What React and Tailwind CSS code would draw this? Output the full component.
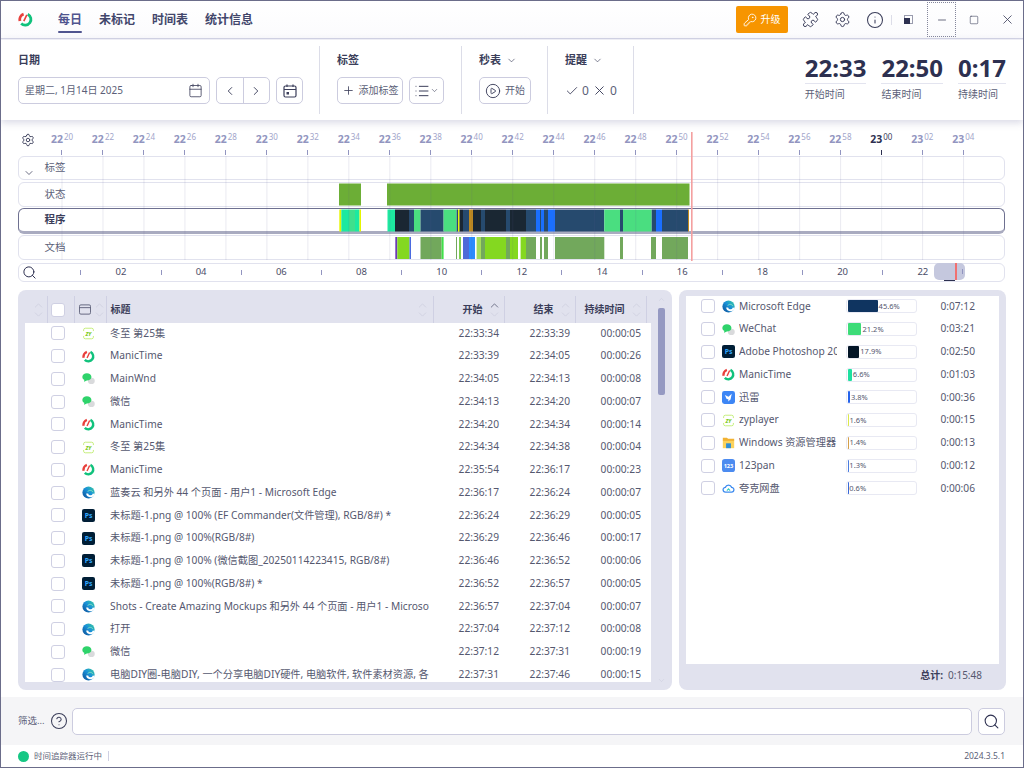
import React from "react";
import {
  Calendar, Check, ChevronDown, ChevronLeft, ChevronRight, ChevronUp,
  CircleHelp, CirclePlay, Info, KeyRound, List, Minus, Plus, Puzzle, Search, Settings, Square, X,
} from "lucide-react";

const FONT = { fontFamily: '"Noto Sans", "Noto Sans CJK SC", sans-serif' };

const Logo = ({ size = 13 }) => (
  <svg width={size} height={size} viewBox="0 0 16 16" fill="none">
    <path d="M10.4 2.4A6.1 6.1 0 1 1 3.4 12.2" stroke="#10c27c" strokeWidth="3" />
    <path d="M6 2.300A6.100 6.100 0 0 0 2.100 9.600" stroke="#e8403c" strokeWidth="3" />
    <path d="M9.400 3 6.200 9.800" stroke="#e8403c" strokeWidth="1.700" />
  </svg>
);
const Edge = () => (
  <svg width="13" height="13" viewBox="0 0 16 16" fill="none">
    <defs>
      <linearGradient id="edge-g" x1="1" y1="0" x2="0" y2="1">
        <stop offset="0" stopColor="#3ccf9a" />
        <stop offset="0.45" stopColor="#1a93d8" />
        <stop offset="1" stopColor="#0b4a94" />
      </linearGradient>
    </defs>
    <circle cx="8" cy="8" r="7.5" fill="url(#edge-g)" />
    <path d="M14.5 9.5c-.8 2.400-3.200 3.600-5.400 3-1.700-.5-2.700-1.800-2.700-3.300" stroke="#fff" strokeWidth="2.4" />
    <path d="M7 7c1-2 5-2.500 6.500.5" stroke="#7fe0c0" strokeWidth="1.2" />
  </svg>
);
const WeChat = () => (
  <svg width="13" height="13" viewBox="0 0 16 16">
    <ellipse cx="11.5" cy="11" rx="4.2" ry="3.8" fill="#d9dadc" />
    <ellipse cx="6" cy="6" rx="5.6" ry="4.6" fill="#2fd36b" />
    <path d="M3 9 2.5 12 6 10.5z" fill="#2fd36b" />
  </svg>
);
const Ps = () => (
  <svg width="13" height="13" viewBox="0 0 16 16">
    <rect width="16" height="16" rx="2.5" fill="#001e36" />
    <text x="8" y="11.5" textAnchor="middle" fontSize="8.5" fontWeight="700" fill="#31a8ff" style={FONT}>Ps</text>
  </svg>
);
const Zy = () => (
  <svg width="13" height="13" viewBox="0 0 16 16" fill="none">
    <path d="M2 5V3.500A2 2 0 0 1 4 1.500h8a2 2 0 0 1 2 2V5M2 11v1.500a2 2 0 0 0 2 2h8a2 2 0 0 0 2-2V11" stroke="#c4ee7a" strokeWidth="1.2" />
    <text x="8" y="10.5" textAnchor="middle" fontSize="6.5" fontWeight="800" fontStyle="italic" fill="#7fcc1f" style={FONT}>ZY</text>
  </svg>
);
const Thunder = () => (
  <svg width="13" height="13" viewBox="0 0 16 16">
    <rect width="16" height="16" rx="3" fill="#3d86f5" />
    <path d="M3.5 5 8 7l4-3.500-1.500 7L7.500 13 8 10.500 5.500 9.500z" fill="#fff" />
  </svg>
);
const Folder = () => (
  <svg width="13" height="13" viewBox="0 0 16 16">
    <path d="M1 2h5l1.500 1.500H15V6H1z" fill="#f2b233" />
    <rect x="1" y="6" width="14" height="9" fill="#fbd25c" />
    <rect x="5" y="9" width="6" height="6" fill="#2f8fd8" />
  </svg>
);
const Pan = () => (
  <svg width="13" height="13" viewBox="0 0 16 16">
    <rect width="16" height="16" rx="3.5" fill="#4c8bf0" />
    <text x="8" y="11" textAnchor="middle" fontSize="7" fontWeight="700" fill="#fff" style={FONT}>123</text>
  </svg>
);
const Quark = () => (
  <svg width="13" height="13" viewBox="0 0 16 16" fill="none">
    <path d="M4.500 12.500a3 3 0 0 1-.3-6 4 4 0 0 1 7.600 0 3 3 0 0 1-.3 6z" stroke="#3f8cf0" strokeWidth="1.6" />
    <path d="M6 10.500 8 8.500l2 2" stroke="#35d0c0" strokeWidth="1.4" />
  </svg>
);

const ICONS = { zy: Zy, mt: Logo, wx: WeChat, edge: Edge, ps: Ps };

const rows = [
  ["zy", "冬至 第25集", "22:33:34", "22:33:39", "00:00:05"],
  ["mt", "ManicTime", "22:33:39", "22:34:05", "00:00:26"],
  ["wx", "MainWnd", "22:34:05", "22:34:13", "00:00:08"],
  ["wx", "微信", "22:34:13", "22:34:20", "00:00:07"],
  ["mt", "ManicTime", "22:34:20", "22:34:34", "00:00:14"],
  ["zy", "冬至 第25集", "22:34:34", "22:34:38", "00:00:04"],
  ["mt", "ManicTime", "22:35:54", "22:36:17", "00:00:23"],
  ["edge", "蓝奏云 和另外 44 个页面 - 用户1 - Microsoft Edge", "22:36:17", "22:36:24", "00:00:07"],
  ["ps", "未标题-1.png @ 100% (EF Commander(文件管理), RGB/8#) *", "22:36:24", "22:36:29", "00:00:05"],
  ["ps", "未标题-1.png @ 100%(RGB/8#)", "22:36:29", "22:36:46", "00:00:17"],
  ["ps", "未标题-1.png @ 100% (微信截图_20250114223415, RGB/8#)", "22:36:46", "22:36:52", "00:00:06"],
  ["ps", "未标题-1.png @ 100%(RGB/8#) *", "22:36:52", "22:36:57", "00:00:05"],
  ["edge", "Shots - Create Amazing Mockups 和另外 44 个页面 - 用户1 - Microsoft Edge", "22:36:57", "22:37:04", "00:00:07"],
  ["edge", "打开", "22:37:04", "22:37:12", "00:00:08"],
  ["wx", "微信", "22:37:12", "22:37:31", "00:00:19"],
  ["edge", "电脑DIY圈-电脑DIY, 一个分享电脑DIY硬件, 电脑软件, 软件素材资源, 各类教程", "22:37:31", "22:37:46", "00:00:15"],
];

const apps = [
  [Edge, "Microsoft Edge", 45.6, "#0f3460", "0:07:12"],
  [WeChat, "WeChat", 21.2, "#3ddc78", "0:03:21"],
  [Ps, "Adobe Photoshop 2025", 17.9, "#031526", "0:02:50"],
  [Logo, "ManicTime", 6.6, "#1fe0a0", "0:01:03"],
  [Thunder, "迅雷", 3.8, "#2563eb", "0:00:36"],
  [Zy, "zyplayer", 1.6, "#dbe84c", "0:00:15"],
  [Folder, "Windows 资源管理器", 1.4, "#d4a04a", "0:00:13"],
  [Pan, "123pan", 1.3, "#4a7de0", "0:00:12"],
  [Quark, "夸克网盘", 0.6, "#3a6ad8", "0:00:06"],
];

const rulerTicks = [
  ["22", "20"], ["22", "22"], ["22", "24"], ["22", "26"], ["22", "28"], ["22", "30"], ["22", "32"], ["22", "34"],
  ["22", "36"], ["22", "38"], ["22", "40"], ["22", "42"], ["22", "44"], ["22", "46"], ["22", "48"], ["22", "50"],
  ["22", "52"], ["22", "54"], ["22", "56"], ["22", "58"], ["23", "00"], ["23", "02"], ["23", "04"],
];

const statusBars = [[339, 361], [387, 689.5]];

const TEAL = "#1de9a0", GRN = "#4ade80", NAVY = "#264a6e", DARK = "#1a2733", BLUE = "#1a6fff", YEL = "#e5f500", ORG = "#c08a1e";
const programBars = [
  [339.3, 341.3, YEL], [341.3, 349, TEAL], [349, 355, "#3fe08c"], [355, 359.5, TEAL], [359.5, 361, YEL],
  [387.5, 395, TEAL], [395, 409, DARK], [409, 414, NAVY], [414, 420.5, GRN], [420.5, 443.6, NAVY], [443.6, 456.6, GRN],
  [456.6, 458, NAVY], [458, 459.5, YEL], [459.5, 463, DARK], [463, 469, NAVY], [469, 473, ORG], [473, 481, DARK],
  [481, 485, NAVY], [485, 506, DARK], [506, 510, NAVY], [510, 526, DARK], [526, 536, NAVY], [536, 540, BLUE],
  [540, 541, NAVY], [541, 544, BLUE], [544, 548, NAVY], [548, 555, BLUE], [555, 604.3, NAVY], [604.3, 620, GRN],
  [620, 623, NAVY], [623, 651.7, GRN], [651.7, 656, NAVY], [656, 662, BLUE], [662, 688, NAVY], [688, 689, ORG],
];

const LIME = "#84d820", MUTE = "#72a85c";
const docBars = [
  [395.3, 397.3, "#6a3ab5"], [397.3, 409.5, LIME], [409.5, 411, "#4a6ae0"], [420.5, 441.6, MUTE], [441.6, 443.6, "#3fe04a"],
  [456, 457, MUTE], [459, 461, "#7fcf50"], [463, 469, "#4f6ad8"], [469, 475, "#2b8cff"], [476.6, 481, "#a5dd5a"],
  [481, 485, MUTE], [485, 506, LIME], [506, 510, MUTE], [510, 518, LIME], [520.6, 526, LIME], [526, 536, MUTE],
  [540, 542, MUTE], [544, 548, MUTE], [555, 604.3, MUTE], [620, 623, MUTE], [651, 656, MUTE], [662, 688, MUTE],
];

const grid = rulerTicks.map((_, i) => 62 + i * 40.98);

const SortIcon = ({ active }) => (
  <span className="flex flex-col items-center text-[#c9cbdc]">
    <ChevronUp size={13} strokeWidth={1.2} className={active ? "text-[#3b3e5a] -mb-[2px]" : "-mb-[2px]"} />
    <ChevronDown size={13} strokeWidth={1.2} className="-mt-[2px]" />
  </span>
);

const Box = ({ className = "" }) => (
  <span className={"block w-[14px] h-[14px] bg-white border border-[#cfd0e3] rounded-[3px] " + className} />
);

const TimelineRow = ({ label, selected, h, chevron }) => (
  <div
    className={
      "relative bg-white rounded-[6px] pl-[25.5px] flex items-center text-[10.5px] " +
      h +
      (selected
        ? " border-[1.5px] border-[#6e7090] border-b-[3px] border-b-[#a9abc0] font-bold text-[#3b3e5a]"
        : " border-[1.5px] border-[#e1e2ee] text-[#5c5f78]")
    }
  >
    {chevron && <ChevronDown size={12} strokeWidth={1.5} className="absolute left-[4px] bottom-[0px] text-[#3b3e5a]" />}
    {label}
  </div>
);

const gridTemplate = "grid grid-cols-[22.6px_27px_32px_327px_71px_71px_71px]";

export default function App() {
  return (
    <div style={FONT} className="w-[1024px] h-[768px] bg-white border border-[#6b6d8a] flex flex-col overflow-hidden text-[#3b3e5a]">
      {/* Title bar */}
      <div className="h-[38px] shrink-0 flex items-center border-b border-[#d5d6e6] bg-gradient-to-b from-white to-[#fbfbfd]">
        <span className="ml-[17px] mr-[25px] flex"><Logo size={15} /></span>
        <div className="flex gap-[17px] text-[12px] font-bold text-[#42466b] pt-[1px]">
          <div className="relative text-[#50558f]">
            每日
            <span className="absolute left-0 right-0 -bottom-[4px] h-[2.5px] rounded bg-[#50558f]" />
          </div>
          <div>未标记</div>
          <div>时间表</div>
          <div>统计信息</div>
        </div>
        <div className="ml-auto flex items-center h-full">
          <button className="w-[52px] h-[27px] bg-[#f79500] rounded-[2px] text-white text-[10px] flex items-center justify-center gap-[4px]">
            <KeyRound size={14} strokeWidth={1.5} />
            升级
          </button>
          <Puzzle size={17} strokeWidth={1.4} className="ml-[14px]" />
          <Settings size={17} strokeWidth={1.4} className="ml-[15px]" />
          <Info size={18} strokeWidth={1.4} className="ml-[15.5px]" />
          <span className="ml-[7px] w-px h-[10px] bg-[#dcdde8]" />
          <svg width="9" height="9" viewBox="0 0 9 9" className="ml-[12px]">
            <rect x="0.5" y="0.5" width="8" height="8" fill="none" stroke="#9a9cae" />
            <rect x="0" y="3" width="6" height="6" fill="#2d3050" />
          </svg>
          <div className="ml-[14px] w-[29px] h-[35px] border border-dotted border-[#85879c] flex items-center justify-center">
            <Minus size={12} strokeWidth={1.5} />
          </div>
          <Square size={10} strokeWidth={1.4} className="ml-[13px]" />
          <X size={15} strokeWidth={1.3} className="ml-[20.5px] mr-[8.5px]" />
        </div>
      </div>

      {/* Toolbar */}
      <div className="h-[81px] shrink-0 flex py-[6px] bg-white relative z-10 shadow-[0_3px_7px_rgba(110,112,160,0.25)] border-t border-[#eeeef5]">
        <div className="w-[319px] pl-[17px] pt-[6px] border-r border-[#dcdde8]">
          <div className="h-[16px] text-[11px] font-semibold leading-[16px]">日期</div>
          <div className="mt-[9px] flex gap-[6px]">
            <div className="w-[192px] h-[27px] border border-[#ccccdf] rounded-[5px] flex items-center justify-between pl-[6px] pr-[6px] text-[10px] text-[#5c5f78]">
              星期二, 1月14日 2025
              <Calendar size={15} strokeWidth={1.3} className="text-[#3b3e5a]" />
            </div>
            <div className="w-[54px] h-[27px] border border-[#ccccdf] rounded-[5px] flex">
              <span className="flex-1 flex items-center justify-center border-r border-[#ccccdf]"><ChevronLeft size={14} strokeWidth={1.6} /></span>
              <span className="flex-1 flex items-center justify-center"><ChevronRight size={14} strokeWidth={1.6} /></span>
            </div>
            <div className="w-[27px] h-[27px] border border-[#ccccdf] rounded-[5px] flex items-center justify-center">
              <svg width="14" height="14" viewBox="0 0 14 14" fill="none" stroke="#3b3e5a" strokeWidth="1.2">
                <rect x="1" y="2" width="12" height="11" rx="1.5" />
                <path d="M1 5.500h12M4 0.500V3M10 0.500V3" />
                <rect x="3.5" y="8" width="2.5" height="2.5" fill="#3b3e5a" stroke="none" />
              </svg>
            </div>
          </div>
        </div>
        <div className="w-[142px] pl-[17px] pt-[6px] border-r border-[#dcdde8]">
          <div className="h-[16px] text-[11px] font-semibold leading-[16px]">标签</div>
          <div className="mt-[9px] flex gap-[6px]">
            <div className="w-[66px] h-[27px] border border-[#ccccdf] rounded-[5px] flex items-center justify-center gap-[4px] text-[10px] text-[#5c5f78] whitespace-nowrap">
              <Plus size={13} strokeWidth={1.5} className="text-[#3b3e5a]" />
              添加标签
            </div>
            <div className="w-[35px] h-[27px] border border-[#ccccdf] rounded-[5px] flex items-center justify-center">
              <List size={16} strokeWidth={1.5} />
              <ChevronDown size={9} strokeWidth={1.5} />
            </div>
          </div>
        </div>
        <div className="w-[86px] pl-[17px] pt-[6px] border-r border-[#dcdde8]">
          <div className="h-[16px] text-[11px] font-semibold leading-[16px] flex items-center gap-[5px]">
            秒表 <ChevronDown size={11} strokeWidth={1.4} />
          </div>
          <div className="mt-[9px] w-[52px] h-[27px] border border-[#ccccdf] rounded-[5px] flex items-center justify-center gap-[4px] text-[10px] text-[#5c5f78]">
            <CirclePlay size={16} strokeWidth={1.4} className="text-[#3b3e5a]" />
            开始
          </div>
        </div>
        <div className="w-[86px] pl-[17px] pt-[6px] border-r border-[#dcdde8]">
          <div className="h-[16px] text-[11px] font-semibold leading-[16px] flex items-center gap-[5px]">
            提醒 <ChevronDown size={11} strokeWidth={1.4} />
          </div>
          <div className="mt-[9px] h-[27px] flex items-center gap-[3px] text-[12px] text-[#5c5f78]">
            <Check size={14} strokeWidth={1.5} className="text-[#3b3e5a]" />
            0
            <X size={15} strokeWidth={1.5} className="text-[#3b3e5a]" />
            0
          </div>
        </div>
        <div className="ml-auto mr-[17px] flex gap-[15px] pt-[7px]">
          {[["22:33", "开始时间"], ["22:50", "结束时间"], ["0:17", "持续时间"]].map(([t, l]) => (
            <div key={l}>
              <div className="text-[24px] leading-[30px] font-bold text-[#2d3050] border-b border-[#e3e4ef]">{t}</div>
              <div className="text-[10px] mt-[3px] leading-[14px] text-[#5c5f78]">{l}</div>
            </div>
          ))}
        </div>
      </div>

      {/* Timeline */}
      <div className="relative h-[160px] mt-[10px] shrink-0">
        <div className="h-[26px] flex pl-[40.5px] relative">
          <Settings size={14} strokeWidth={1.6} className="absolute left-[20px] top-[3px]" />
          {rulerTicks.map(([h, m], i) => (
            <div key={i} className="w-[40.98px] flex flex-col items-center">
              <div className={"h-[20px] leading-[18px] text-[10.5px] font-bold whitespace-nowrap " + (h === "23" && m === "00" ? "text-[#2d3050]" : "text-[#9295c0]")}>
                {h}
                <span className={"text-[8px] font-normal relative -top-[3px] ml-px " + (h === "23" && m === "00" ? "text-[#3b3e5a]" : "text-[#a2a5ca]")}>{m}</span>
              </div>
              <span className={"w-px h-[5px] " + (h === "23" && m === "00" ? "bg-[#2d3050]" : "bg-[#9295c0]")} />
            </div>
          ))}
        </div>
        <div className="ml-[17px] w-[987px] flex flex-col">
          <TimelineRow label="标签" h="h-[24px]" chevron />
          <div className="h-[2px]" />
          <TimelineRow label="状态" h="h-[25px]" />
          <div className="h-px" />
          <TimelineRow label="程序" selected h="h-[26px]" />
          <div className="h-px" />
          <TimelineRow label="文档" h="h-[25px]" />
          <div className="mt-[3px] relative h-[19px] bg-white border-[1.5px] border-[#e1e2ee] rounded-[6px] flex items-center pl-[41.8px] text-[9.5px] text-[#4a4d68]">
            <Search size={15} strokeWidth={1.6} className="absolute left-[3px] top-[0.5px] text-[#2d3050]" />
            {Array.from({ length: 23 }, (_, i) => (
              <div key={i} className="w-[40.1px] flex justify-center">
                {i % 2 === 0 ? <span className="block w-px h-[5px] bg-[#9295c0]" /> : String(i + 1).padStart(2, "0")}
              </div>
            ))}
            <div className="absolute left-[915px] -top-[1px] w-[31px] h-[17px] bg-[#c5c8de] rounded-[5px]">
              <span className="absolute left-[21px] top-0 w-[1.5px] h-full bg-[#f07070]" />
              <span className="absolute left-[27.5px] top-[6px] w-px h-[5px] bg-[#9295c0]" />
              <span className="absolute left-[10px] -bottom-[1px] w-[11px] h-[1.5px] bg-[#2d3050]" />
            </div>
          </div>
        </div>
        <svg className="absolute -left-px top-0 pointer-events-none" width="1024" height="135" viewBox="0 130 1024 135">
          {statusBars.map(([a, b], i) => <rect key={i} x={a} y="183.5" width={b - a} height="22" fill="#6cae36" />)}
          {programBars.map(([a, b, c], i) => <rect key={i} x={a} y="209.5" width={b - a} height="22" fill={c} />)}
          {docBars.map(([a, b, c], i) => <rect key={i} x={a} y="237" width={b - a} height="22" fill={c} />)}
          {grid.map((x, i) => <line key={i} x1={x} x2={x} y1="156" y2="260" stroke={i === 20 ? "#8e90a8" : "#5a5d90"} strokeOpacity="0.13" />)}
          <rect x="691" y="132" width="1.6" height="129" fill="#f4a0a0" />
        </svg>
      </div>

      {/* Panels */}
      <div className="h-[400px] shrink-0 flex gap-[7px] pl-[17px]">
        <div className="w-[654px] bg-[#e1e2ee] rounded-[8px] relative pl-[7px] pb-[8px] flex flex-col">
          <div className={gridTemplate + " h-[33px] shrink-0 w-[626px] items-center text-[10px] font-bold"}>
            <div className="h-[27px] mt-[6px] border-r border-[#cfd0e3] flex items-center justify-end pr-[2px]"><SortIcon /></div>
            <div className="h-[27px] mt-[6px] border-r border-[#cfd0e3] pl-[3px] flex items-center"><Box /></div>
            <div className="h-[27px] mt-[6px] border-r border-[#cfd0e3] pl-[4px] flex items-center gap-[2px]">
              <svg width="13" height="11" viewBox="0 0 13 11" fill="none" stroke="#5c5f78">
                <rect x="0.5" y="0.5" width="12" height="10" rx="1.5" />
                <path d="M0.500 3.500h12" />
              </svg>
              <SortIcon />
            </div>
            <div className="h-[27px] mt-[6px] border-r border-[#cfd0e3] pl-[4px] pr-[4px] flex items-center justify-between">标题<SortIcon /></div>
            <div className="h-[27px] mt-[6px] border-r border-[#cfd0e3] pr-[3px] flex items-center justify-end gap-[5px]">开始<SortIcon active /></div>
            <div className="h-[27px] mt-[6px] border-r border-[#cfd0e3] pr-[3px] flex items-center justify-end gap-[5px]">结束<SortIcon /></div>
            <div className="h-[27px] mt-[6px] border-r border-[#cfd0e3] pr-[3px] flex items-center justify-end gap-[5px] whitespace-nowrap">持续时间<SortIcon /></div>
          </div>
          <div className="w-[626px] flex-1 bg-white overflow-hidden text-[10.2px] text-[#55586f]">
            {rows.map(([icon, title, a, b, c], i) => {
              const Ico = ICONS[icon];
              return (
                <div key={i} className={gridTemplate + " h-[22.75px] items-center -translate-y-[1px]"}>
                  <div />
                  <div className="pl-[3px]"><Box /></div>
                  <div className="pl-[7.5px] flex"><Ico /></div>
                  <div className="pl-[3.5px] mr-[5px] overflow-hidden whitespace-nowrap">{title}</div>
                  <div className="text-right pr-[5.6px]">{a}</div>
                  <div className="text-right pr-[5.6px]">{b}</div>
                  <div className="text-right pr-[5.6px]">{c}</div>
                </div>
              );
            })}
          </div>
          <ChevronUp size={9} strokeWidth={1.3} className="absolute right-[6.5px] top-[5px] text-[#c9cbdc]" />
          <ChevronDown size={9} strokeWidth={1.3} className="absolute right-[6.5px] bottom-[5px] text-[#c9cbdc]" />
          <div className="absolute right-[7px] top-[18px] w-[7px] h-[87px] rounded-[2px] bg-[#9599c2]" />
        </div>

        <div className="w-[327px] bg-[#e1e2ee] rounded-[8px] px-[7px] pt-[6px] flex flex-col">
          <div className="h-[368px] bg-white text-[10.2px] text-[#55586f]">
            {apps.map(([Ico, name, pct, color, time]) => (
              <div key={name} className="h-[22.75px] pl-[15px] flex items-center -translate-y-[1px]">
                <Box />
                <span className="ml-[6.5px] shrink-0 flex"><Ico /></span>
                <span className="ml-[4.5px] w-[98px] shrink-0 overflow-hidden whitespace-nowrap">{name}</span>
                <div className="ml-[8.5px] w-[71px] h-[14px] shrink-0 border border-[#e8e9f3] rounded-[3px] flex items-center pl-px">
                  <span className="h-[12px] rounded-[1px]" style={{ width: Math.max(pct * 0.66, 0.8), backgroundColor: color }} />
                  <span className="ml-px text-[7.5px]">{pct}%</span>
                </div>
                <span className="ml-auto mr-[24px]">{time}</span>
              </div>
            ))}
          </div>
          <div className="flex-1 flex items-center justify-end pr-[17px] pb-[3px] gap-[5px] text-[10px] text-[#55586f]">
            <span className="font-bold text-[#3b3e5a]">总计:</span>0:15:48
          </div>
        </div>
      </div>

      {/* Filter */}
      <div className="mt-[7px] h-[48px] shrink-0 bg-[#f5f5f7] flex items-center pl-[17px] pr-[18px]">
        <span className="w-[32px] text-[9.5px] text-[#5c5f78]">筛选...</span>
        <CircleHelp size={18} strokeWidth={1.4} />
        <div className="ml-[4px] flex-1 h-[27px] bg-white border border-[#ccccdf] rounded-[5px]" />
        <div className="ml-[6px] w-[27px] h-[27px] bg-white border border-[#ccccdf] rounded-[5px] flex items-center justify-center">
          <Search size={17} strokeWidth={1.5} className="text-[#2d3050]" />
        </div>
      </div>

      {/* Status bar */}
      <div className="flex-1 flex items-center pl-[17px] pr-[18px] text-[8.5px] text-[#5c5f78]">
        <span className="w-[11px] h-[11px] rounded-full bg-[#16c784]" />
        <span className="ml-[5px]">时间追踪器运行中</span>
        <span className="ml-[6px] w-px h-[10px] bg-[#cfd0e3]" />
        <span className="ml-auto">2024.3.5.1</span>
      </div>
    </div>
  );
}
